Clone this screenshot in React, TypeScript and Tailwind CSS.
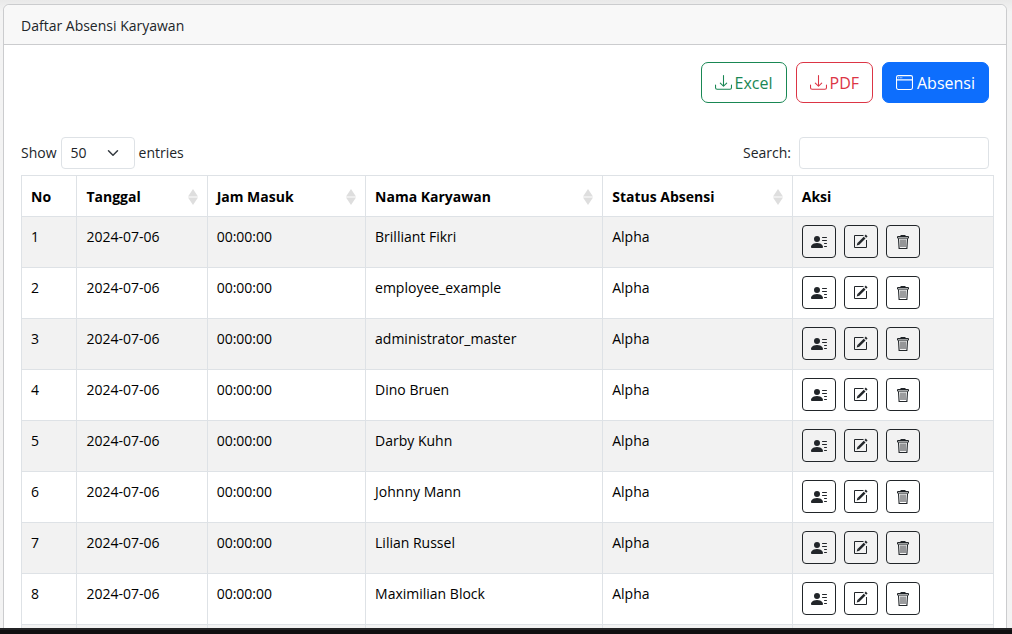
import React from "react";
import { BsDownload, BsWindow, BsPersonLinesFill } from "react-icons/bs";

const names = [
  "Brilliant Fikri",
  "employee_example",
  "administrator_master",
  "Dino Bruen",
  "Darby Kuhn",
  "Johnny Mann",
  "Lilian Russel",
  "Maximilian Block",
];

const columns = [
  { label: "No", width: "w-[5.7%]", sortable: false },
  { label: "Tanggal", width: "w-[13.4%]", sortable: true },
  { label: "Jam Masuk", width: "w-[16.3%]", sortable: true },
  { label: "Nama Karyawan", width: "w-[24.4%]", sortable: true },
  { label: "Status Absensi", width: "w-[19.5%]", sortable: true },
  { label: "Aksi", width: "w-[20.7%]", sortable: false },
];

function SortIcon() {
  return (
    <svg viewBox="0 0 10 16" className="h-4 w-2.5 shrink-0 fill-[#dedede]" aria-hidden="true">
      <path d="M0 7.5 5 0l5 7.5zM0 8.5h10L5 16z" />
    </svg>
  );
}

function EditIcon() {
  return (
    <svg viewBox="0 0 16 16" className="size-4" fill="none" stroke="currentColor" aria-hidden="true">
      <path d="M10.5 1.5h-9v12h12V6" />
      <path d="m5.4 9.8 6.2-6.2" strokeWidth="2.5" />
      <path d="m12.3 2.9 1.4-1.4" strokeWidth="2.5" />
      <path d="m3.7 11.5.8-2.7 1.9 1.9z" fill="currentColor" stroke="none" />
    </svg>
  );
}

function TrashIcon() {
  return (
    <svg viewBox="0 0 16 16" className="size-4" fill="none" stroke="currentColor" aria-hidden="true">
      <path d="M5.5 1.5h5" />
      <path d="M2.5 2.5h11v1.6h-11z" />
      <path d="m3.5 4.5.6 10h7.8l.6-10" strokeWidth="1.1" />
      <path d="M6 5.5v7.5M8 5.5v7.5M10 5.5v7.5" strokeWidth="0.9" />
    </svg>
  );
}

function ActionButton({ label, children }: { label: string; children: React.ReactNode }) {
  return (
    <button
      type="button"
      aria-label={label}
      className="flex h-[33px] w-[34px] items-center justify-center rounded-[4px] border border-[#212529] text-base text-[#212529]"
    >
      {children}
    </button>
  );
}

export default function App() {
  return (
    <div className="flex h-screen flex-col bg-[#f3f3f3] font-['Open_Sans','Noto_Sans',sans-serif] text-sm leading-[22px] text-[#212529]">
      <main className="min-h-0 flex-1 overflow-hidden bg-linear-to-b from-[#e9e9e9] to-[#f3f3f3] to-[12px] pt-1 pr-[5px] pl-[3px]">
        <section className="rounded-md border border-[#cbccce] bg-white">
          <header className="rounded-t-md border-b border-[#cbccce] bg-[#f8f8f8] px-[17px] pt-[10px] pb-[7px]">
            <h1>Daftar Absensi Karyawan</h1>
          </header>
          <div className="pt-[17px] pr-3 pl-[17px]">
            <div className="flex justify-end gap-[9px] pr-[5px] text-base">
              <button type="button" className="flex h-[41px] items-center gap-[3px] rounded-[7px] border border-[#198754] px-[13px] text-[#198754]">
                <BsDownload className="size-[17px]" />
                Excel
              </button>
              <button type="button" className="flex h-[41px] items-center gap-[3px] rounded-[7px] border border-[#dc3545] px-[13px] text-[#dc3545]">
                <BsDownload className="size-[17px]" />
                PDF
              </button>
              <button type="button" className="flex h-[41px] items-center gap-1 rounded-[7px] border border-[#0d6efd] bg-[#0d6efd] px-[13px] text-white">
                <BsWindow className="size-[17px]" />
                Absensi
              </button>
            </div>
            <div className="mt-[34px] mb-[6px] flex items-center justify-between pr-[5px]">
              <label className="flex items-center gap-1">
                Show
                <span className="relative">
                  <select className="block h-8 w-[74px] appearance-none rounded-[4px] border border-[#dee2e6] bg-white pl-[9px]" defaultValue="50">
                    <option>10</option>
                    <option>25</option>
                    <option>50</option>
                    <option>100</option>
                  </select>
                  <svg viewBox="0 0 16 16" className="pointer-events-none absolute top-[10px] right-4 size-3 fill-none stroke-[#343a40] stroke-2" aria-hidden="true">
                    <path strokeLinecap="round" strokeLinejoin="round" d="m2 5 6 6 6-6" />
                  </svg>
                </span>
                entries
              </label>
              <label className="flex items-center gap-2">
                Search:
                <input type="search" className="h-8 w-[190px] rounded-[4px] border border-[#dee2e6] bg-white px-2" />
              </label>
            </div>
            <table className="w-full table-fixed border-collapse text-left text-black">
              <thead>
                <tr className="h-[41px]">
                  {columns.map((column) => (
                    <th key={column.label} scope="col" className={`border border-[#dee2e6] px-[9px] pt-0.5 font-bold ${column.width}`}>
                      <div className="flex items-center justify-between">
                        {column.label}
                        {column.sortable && <SortIcon />}
                      </div>
                    </th>
                  ))}
                </tr>
              </thead>
              <tbody>
                {names.map((name, index) => (
                  <tr key={name} className="h-[51px] align-top odd:bg-[#f2f2f2]">
                    <td className="border border-[#dee2e6] px-[9px] pt-[9px]">{index + 1}</td>
                    <td className="border border-[#dee2e6] px-[9px] pt-[9px]">2024-07-06</td>
                    <td className="border border-[#dee2e6] px-[9px] pt-[9px]">00:00:00</td>
                    <td className="border border-[#dee2e6] px-[9px] pt-[9px]">{name}</td>
                    <td className="border border-[#dee2e6] px-[9px] pt-[9px]">Alpha</td>
                    <td className="border border-[#dee2e6] px-[9px] pt-2">
                      <div className="flex gap-2">
                        <ActionButton label="Detail">
                          <BsPersonLinesFill />
                        </ActionButton>
                        <ActionButton label="Edit">
                          <EditIcon />
                        </ActionButton>
                        <ActionButton label="Hapus">
                          <TrashIcon />
                        </ActionButton>
                      </div>
                    </td>
                  </tr>
                ))}
                <tr className="h-[51px] bg-[#f2f2f2]">
                  {columns.map((column) => (
                    <td key={column.label} className="border border-[#dee2e6]" />
                  ))}
                </tr>
              </tbody>
            </table>
          </div>
        </section>
      </main>
      <footer className="h-1.5 border-t-2 border-[#232325] bg-[#0f0f10]" />
    </div>
  );
}
